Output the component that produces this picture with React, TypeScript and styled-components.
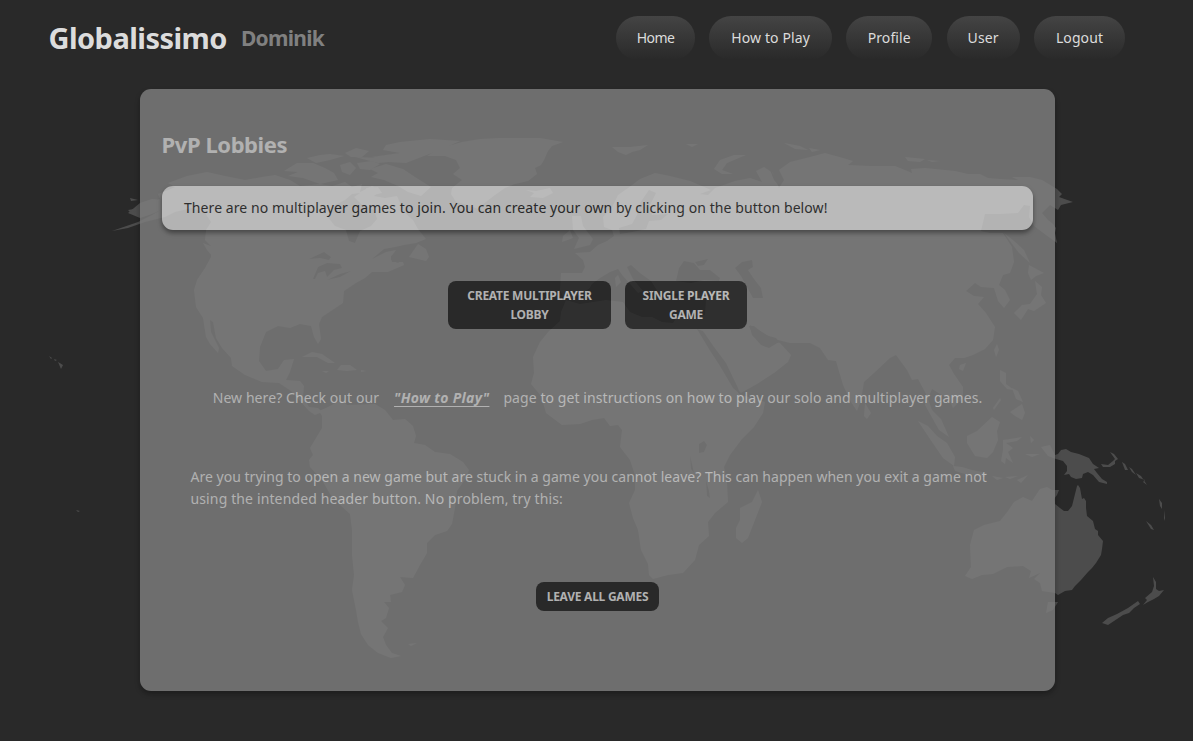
import React from "react";
import styled, { createGlobalStyle } from "styled-components";

const SEA = "#292929";
const LAND = "#4c4c4c";

const GlobalStyle = createGlobalStyle`
  html, body {
    margin: 0;
    height: 100%;
    overflow: hidden;
    background: ${SEA};
  }
  body {
    font-family: "Noto Sans", "Open Sans", sans-serif;
    font-size: 14px;
    line-height: 22px;
    color: #d3d3d3;
  }
  #root {
    height: 100%;
  }
`;

const Page = styled.div`
  position: relative;
  isolation: isolate;
  width: 1193px;
  height: 741px;
  overflow: hidden;
  display: flex;
  flex-direction: column;
  align-items: center;
`;

const Backdrop = styled.svg`
  position: absolute;
  inset: 0;
  z-index: -1;
`;

const Header = styled.header`
  box-sizing: border-box;
  width: 100%;
  height: 89px;
  padding: 16px 68px 0 48.5px;
  display: flex;
  align-items: flex-start;
  justify-content: space-between;
`;

const Brand = styled.div`
  display: flex;
  align-items: center;
  height: 44px;
  gap: 14px;
`;

const Title = styled.h1`
  margin: 0;
  font-size: 29px;
  letter-spacing: -0.55px;
  color: #dcdcdc;
`;

const UserName = styled.h2`
  margin: 0;
  font-size: 21px;
  letter-spacing: -0.72px;
  color: #808080;
`;

const Nav = styled.nav`
  display: flex;
  gap: 14.4px;
`;

const NavPill = styled.a<{ $width: number; $tracking?: number }>`
  box-sizing: border-box;
  width: ${(p) => p.$width}px;
  height: 44px;
  border-radius: 22px;
  display: flex;
  align-items: center;
  justify-content: center;
  background: linear-gradient(to bottom, #444444, ${SEA});
  color: #dcdcdc;
  letter-spacing: ${(p) => p.$tracking ?? 0.1}px;
  text-decoration: none;
  white-space: nowrap;
`;

const Card = styled.main`
  box-sizing: border-box;
  width: 915px;
  height: 602px;
  margin-left: 2px;
  padding: 44px 22px 0;
  border-radius: 11px;
  background: #808080;
  opacity: 0.8;
  box-shadow: 0 3px 5px rgba(0, 0, 0, 0.35);
  display: flex;
  flex-direction: column;
  align-items: center;
`;

const Heading = styled.h2`
  align-self: flex-start;
  margin: 0 0 31px -0.5px;
  font-size: 22px;
  line-height: 22px;
  letter-spacing: -0.42px;
`;

const Notice = styled.div`
  box-sizing: border-box;
  width: 100%;
  padding: 11px 22px;
  border-radius: 11px;
  background: #d6d6d6;
  color: #292929;
  letter-spacing: 0.08px;
  box-shadow: 0 3px 5px rgba(0, 0, 0, 0.45);
`;

const ButtonRow = styled.div<{ $top: number }>`
  display: flex;
  gap: 14px;
  margin-top: ${(p) => p.$top}px;
`;

const Button = styled.button<{ $width: number }>`
  box-sizing: border-box;
  width: ${(p) => p.$width}px;
  padding: 5px 8px;
  border: 0;
  border-radius: 8px;
  background: #292929;
  color: #d3d3d3;
  font: 700 12px/19px "Noto Sans", sans-serif;
  letter-spacing: -0.25px;
  text-transform: uppercase;
  white-space: nowrap;
`;

const Hint = styled.p`
  display: flex;
  margin: 58px 0 0;
  letter-spacing: 0.08px;
  white-space: nowrap;
`;

const HintLink = styled.a`
  margin: 0 14px 0 15px;
  font-weight: 700;
  font-style: italic;
  letter-spacing: 0.3px;
  text-decoration: underline;
  text-decoration-thickness: 1px;
  text-underline-offset: 3px;
`;

const Help = styled.p`
  box-sizing: border-box;
  width: 100%;
  margin: 57px 0 0;
  padding-left: 28.5px;
`;

const HelpLine = styled.span<{ $tracking: number }>`
  display: block;
  white-space: nowrap;
  letter-spacing: ${(p) => p.$tracking}px;
`;

const continents = [
  // North America
  "112,231 138,222 152,215 164,208 155,206 152,202 160,199 158,194 168,190 175,187 168,183 187,176 207,172 225,176 245,180 262,177 275,175 290,180 300,186 320,184 332,186 345,182 352,187 362,184 360,192 372,186 380,190 374,196 385,198 397,196 404,212 413,220 418,229 426,239 416,243 404,245 395,247 384,249 372,259 386,252 396,250 391,257 392,262 403,262 404,265 388,272 372,272 365,278 356,283 344,291 343,303 334,309 322,317 319,324 321,339 318,344 314,337 311,326 300,324 290,328 278,326 266,332 260,347 259,361 266,371 278,369 284,360 294,359 290,372 286,380 300,381 304,386 303,397 309,407 318,408 322,412 315,415 309,411 300,401 291,391 279,383 262,382 245,375 232,366 231,358 222,348 216,338 213,322 210,320 211,332 219,348 218,353 210,344 206,337 203,318 196,307 194,290 197,280 205,268 211,257 211,246 205,240 206,230 211,222 205,213 192,208 175,212 165,217 145,222 128,228",
  // Bering coast
  "128,213 140,203 152,199 164,200 166,208 152,214 140,218",
  // Greenland
  "427,156 438,149 448,146 462,142 480,139 500,138 540,138 563,142 552,146 548,151 544,160 541,165 535,168 537,174 528,181 515,184 505,188 495,195 482,205 478,209 468,205 456,202 451,194 452,188 462,180 453,174 460,168 456,160 445,156",
  // South America
  "319,411 328,407 337,402 343,401 347,405 375,404 385,410 393,420 405,419 413,426 416,436 414,443 425,445 435,452 450,454 463,462 469,470 466,478 457,491 455,508 452,524 447,531 435,535 427,543 427,553 420,565 413,578 400,577 405,585 402,592 390,595 391,602 384,602 389,608 386,618 381,621 388,628 383,637 386,645 392,653 401,656 391,658 378,653 368,645 361,634 358,622 356,610 352,590 354,575 352,555 352,530 350,514 340,505 330,494 322,480 310,467 309,460 313,455 310,448 316,438 322,428 322,416",
  // Europe and Asia
  "561,273 582,273 585,267 583,260 575,253 590,252 598,245 607,241 614,236 612,230 604,227 603,217 612,207 618,195 628,188 640,179 655,173 670,176 690,181 702,186 711,190 700,194 708,195 715,188 735,181 750,178 762,182 756,171 764,167 773,173 779,188 784,180 779,170 790,162 810,157 825,153 843,158 853,161 848,165 870,166 895,166 905,170 912,173 911,169 925,168 935,169 955,171 968,174 980,174 988,178 1000,179 1018,180 1012,177 1030,177 1042,180 1057,189 1062,194 1059,197 1073,202 1061,205 1058,210 1050,205 1042,213 1048,220 1053,224 1056,228 1055,233 1057,243 1046,235 1034,226 1029,217 1030,206 1024,205 1018,213 1000,214 985,214 981,231 990,233 1003,233 1012,247 1014,262 1010,273 1003,275 999,285 1005,290 1010,300 1004,308 998,301 994,288 981,287 975,283 966,291 974,296 984,297 978,304 986,313 995,327 993,340 985,349 973,355 964,358 955,358 949,365 954,374 963,387 963,398 953,408 949,399 940,394 932,389 928,399 932,410 941,419 949,437 939,430 930,414 925,405 926,394 918,379 912,380 907,370 896,355 890,358 874,373 864,382 861,400 857,411 851,402 843,385 836,361 828,360 820,348 810,343 790,343 778,340 770,337 757,329 750,325 752,335 766,347 776,342 780,343 791,355 788,362 774,373 757,384 741,393 736,388 725,367 711,347 700,330 690,318 665,297 657,300 635,300 616,297 595,285 576,297 564,299 560,290",
  // Africa
  "566,300 600,296 632,296 700,310 704,331 716,350 726,369 739,394 765,402 763,413 754,427 742,439 730,455 724,467 727,482 728,502 715,513 708,522 709,536 699,545 695,560 683,573 668,575 653,579 649,575 648,564 641,550 638,530 633,518 629,503 635,490 635,475 630,460 620,447 622,430 618,425 610,426 604,418 592,420 580,424 562,425 546,413 541,396 531,384 534,373 533,357 540,342 549,331 560,321 561,312",
  // Australia
  "1078,485 1080,488 1082,499 1084,498 1086,501 1086,508 1087,516 1093,521 1095,529 1098,531 1098,535 1103,541 1102,549 1101,555 1096,563 1092,568 1088,572 1081,580 1075,586 1072,590 1065,591 1058,595 1055,593 1042,591 1040,583 1034,579 1040,573 1029,578 1031,571 1023,566 1007,567 993,574 982,575 972,579 965,576 971,567 970,545 974,530 984,525 1000,521 1008,511 1014,502 1023,497 1032,501 1040,489 1047,487 1052,490 1059,490 1057,495 1054,499 1055,504 1060,508 1064,511 1068,511 1072,506 1075,494 1077,486",
];

const islands = [
  // Canadian Arctic
  "284,171 297,163 313,163 325,168 334,173 338,180 320,184 303,178 288,176 298,172",
  "370,169 386,164 403,169 415,177 431,187 421,196 408,192 398,186 384,180 371,177 378,173",
  "386,145 400,142 430,139 460,141 440,150 424,156 406,163 388,162 372,157 400,153 383,150",
  "307,158 320,155 330,154 344,156 330,160 316,163",
  "345,153 356,148 369,151 362,157 351,157",
  "340,165 350,162 356,168 350,175 342,172",
  "357,163 372,161 380,164 370,170 360,169",
  "366,188 378,187 382,193 370,196",
  "355,157 380,158 400,161 378,163",
  // Great Britain, Ireland, Iceland
  "572,216 581,216 583,226 593,239 590,245 574,249 579,238 573,230",
  "563,236 570,230 573,238 562,242",
  "526,190 536,191 550,188 553,193 543,198 530,197 534,193",
  // Svalbard, Novaya Zemlya and the Russian Arctic
  "612,147 630,147 648,145 640,150 632,152 626,155 618,152",
  "686,144 698,144 692,147",
  "746,155 734,155 720,160 714,169 722,174 733,174 722,170 727,163",
  "784,143 800,146 808,150 795,149",
  "809,148 820,150 812,152",
  "905,157 925,159 920,162 908,161",
  "927,160 940,161 932,162",
  // Mediterranean
  "618,275 621,282 616,287 615,278",
  // Japan and Sakhalin
  "1004,233 1014,241 1024,250 1030,263 1019,253",
  "1029,265 1044,273 1036,276 1031,280 1028,273",
  "1035,281 1042,287 1041,295 1046,303 1034,311 1028,309 1021,320 1014,313 1022,305 1030,304 1037,294",
  // Taiwan, Hainan, Philippines
  "997,344 999,350 996,357 994,350",
  "960,365 966,363 963,371 959,369",
  "1000,370 1006,373 1006,384 1014,390 1007,389 1000,381",
  "1012,388 1018,391 1023,402 1016,399",
  "1010,412 1016,408 1022,404 1025,413 1022,420 1015,416",
  "1000,398 1001,400 994,410 993,408",
  // Indonesia
  "992,417 1000,422 997,431 998,440 993,452 987,458 975,456 967,443 967,436 977,431",
  "918,421 928,426 937,436 947,443 955,457 954,466 943,458 932,442",
  "953,466 962,467 972,470 987,473 985,477 968,475 955,471",
  "992,476 1003,478 997,480",
  "1005,477 1018,476 1010,479",
  "1017,480 1028,475 1021,483",
  "1003,440 1010,439 1022,437 1017,441 1006,443 1013,448 1008,452 1013,463 1006,458 1005,464 1001,461 1003,450",
  "1030,436 1034,440 1031,443",
  "1025,454 1040,454 1032,457",
  // New Guinea and the Solomons
  "1041,447 1050,445 1055,455 1058,454 1061,450 1066,449 1071,452 1079,454 1089,458 1093,464 1099,468 1094,469 1097,473 1102,479 1107,482 1107,484 1099,482 1093,475 1088,472 1083,474 1082,478 1076,479 1071,477 1069,474 1064,475 1067,471 1067,466 1063,461 1056,459 1048,456",
  "1110,452 1114,454 1118,459 1115,461 1115,464 1110,467 1103,467 1101,464 1108,465 1113,461 1115,459",
  "1122,462 1125,464 1128,470 1125,470",
  "1129,467 1132,469 1136,475 1132,472",
  "1136,473 1141,476 1147,485 1143,482 1145,480 1139,478",
  "1146,521 1151,525 1154,530 1151,529",
  "1159,499 1162,503 1162,509 1160,506",
  "1164,510 1165,518 1164,521",
  // Tasmania, New Zealand
  "1048,602 1058,602 1053,610 1046,613",
  "1153,577 1156,582 1156,589 1159,591 1164,590 1159,596 1154,599 1148,602 1143,605 1147,600 1145,598 1152,592 1154,586",
  "1138,601 1140,604 1134,608 1129,613 1123,615 1114,621 1108,625 1102,623 1108,618 1117,614 1128,608",
  // Madagascar, Sri Lanka
  "758,490 762,502 748,538 742,543 736,538 736,528 740,520 740,508 752,502",
  "865,403 871,413 867,419 864,416",
  // Cuba, Hispaniola, Jamaica, Puerto Rico
  "302,357 312,352 322,354 335,363 328,363 317,357",
  "337,370 341,365 350,365 357,370 347,371",
  "322,371 329,371 326,373",
  "361,370 366,371 361,372",
  // Newfoundland, Vancouver Island, Falklands
  "418,244 426,249 429,257 426,261 409,257",
  "203,243 213,247 217,254 213,257 207,250",
  "408,644 417,643 411,646",
  // Aleutians, Hawaii and Polynesia
  "130,198 138,200 131,201",
  "128,210 134,209 138,211 130,212",
  "58,362 63,365 61,369",
  "49,356 52,358 51,359",
  "54,359 57,360 55,361",
  "76,510 80,511 78,512",
];

const waters = [
  // Hudson Bay
  "360,193 352,194 345,200 335,205 327,216 335,226 346,230 349,241 355,243 360,231 371,226 377,219 374,210 362,205 354,197",
  // Great Lakes
  "309,259 324,252 331,257 329,260 320,258",
  "313,279 318,267 327,263 340,264 342,268 334,270 327,277 325,271 318,273 315,279",
  "327,280 340,274 351,271 340,277",
  // Gulf of St Lawrence
  "391,256 400,252 411,248 404,258 398,263 391,260",
  // Baltic
  "619,228 632,224 637,215 640,203 649,190 656,193 650,205 652,215 668,214 661,220 649,221 646,229 632,232 620,234",
  // Mediterranean, Adriatic, Aegean
  "566,300 577,299 588,291 592,284 600,278 610,272 618,269 623,276 631,285 638,293 643,291 633,279 627,267 631,265 640,273 651,281 658,292 664,300 669,294 682,293 695,297 706,298 705,315 692,318 678,315 673,323 662,322 652,317 642,317 630,312 623,302 606,300 580,304",
  // Black Sea and Azov
  "676,281 679,268 684,261 694,263 700,270 710,270 720,278 719,281 704,280 691,283",
  "695,262 708,259 704,265 698,266",
  // Caspian
  "735,268 742,262 752,260 753,267 748,270 754,279 761,288 763,298 753,298 747,287 741,276",
  // Red Sea
  "697,329 703,331 714,347 726,363 738,388 740,394 733,388 720,366 709,349",
  // Persian Gulf
  "749,326 754,326 765,335 776,338 779,342 769,348 761,345 753,336",
  // African lakes
  "699,444 704,441 707,445 704,452 699,453",
  "690,456 692,464 694,473 691,469",
  "706,480 709,491 710,498 707,496",
  // Ob gulf
  "770,170 777,178 780,187 774,180",
];

function WorldMap() {
  return (
    <Backdrop width="1193" height="741" viewBox="0 0 1193 741" aria-hidden="true">
      <g fill={LAND}>
        {continents.map((points) => (
          <polygon key={points} points={points} />
        ))}
      </g>
      <g fill={SEA}>
        {waters.map((points) => (
          <polygon key={points} points={points} />
        ))}
      </g>
      <g fill={LAND}>
        {islands.map((points) => (
          <polygon key={points} points={points} />
        ))}
      </g>
    </Backdrop>
  );
}

export default function App() {
  return (
    <Page>
      <GlobalStyle />
      <WorldMap />
      <Header>
        <Brand>
          <Title>Globalissimo</Title>
          <UserName>Dominik</UserName>
        </Brand>
        <Nav>
          <NavPill $width={79} $tracking={-0.6}>Home</NavPill>
          <NavPill $width={122.4}>How to Play</NavPill>
          <NavPill $width={86}>Profile</NavPill>
          <NavPill $width={73}>User</NavPill>
          <NavPill $width={91}>Logout</NavPill>
        </Nav>
      </Header>
      <Card>
        <Heading>PvP Lobbies</Heading>
        <Notice>
          There are no multiplayer games to join. You can create your own by clicking on the button
          below!
        </Notice>
        <ButtonRow $top={51}>
          <Button $width={163}>
            Create Multiplayer
            <br />
            Lobby
          </Button>
          <Button $width={122}>
            Single Player
            <br />
            Game
          </Button>
        </ButtonRow>
        <Hint>
          New here? Check out our
          <HintLink>"How to Play"</HintLink>
          page to get instructions on how to play our solo and multiplayer games.
        </Hint>
        <Help>
          <HelpLine $tracking={0.02}>
            Are you trying to open a new game but are stuck in a game you cannot leave? This can
            happen when you exit a game not
          </HelpLine>
          <HelpLine $tracking={0.13}>
            using the intended header button. No problem, try this:
          </HelpLine>
        </Help>
        <ButtonRow $top={72}>
          <Button $width={123}>Leave all games</Button>
        </ButtonRow>
      </Card>
    </Page>
  );
}
